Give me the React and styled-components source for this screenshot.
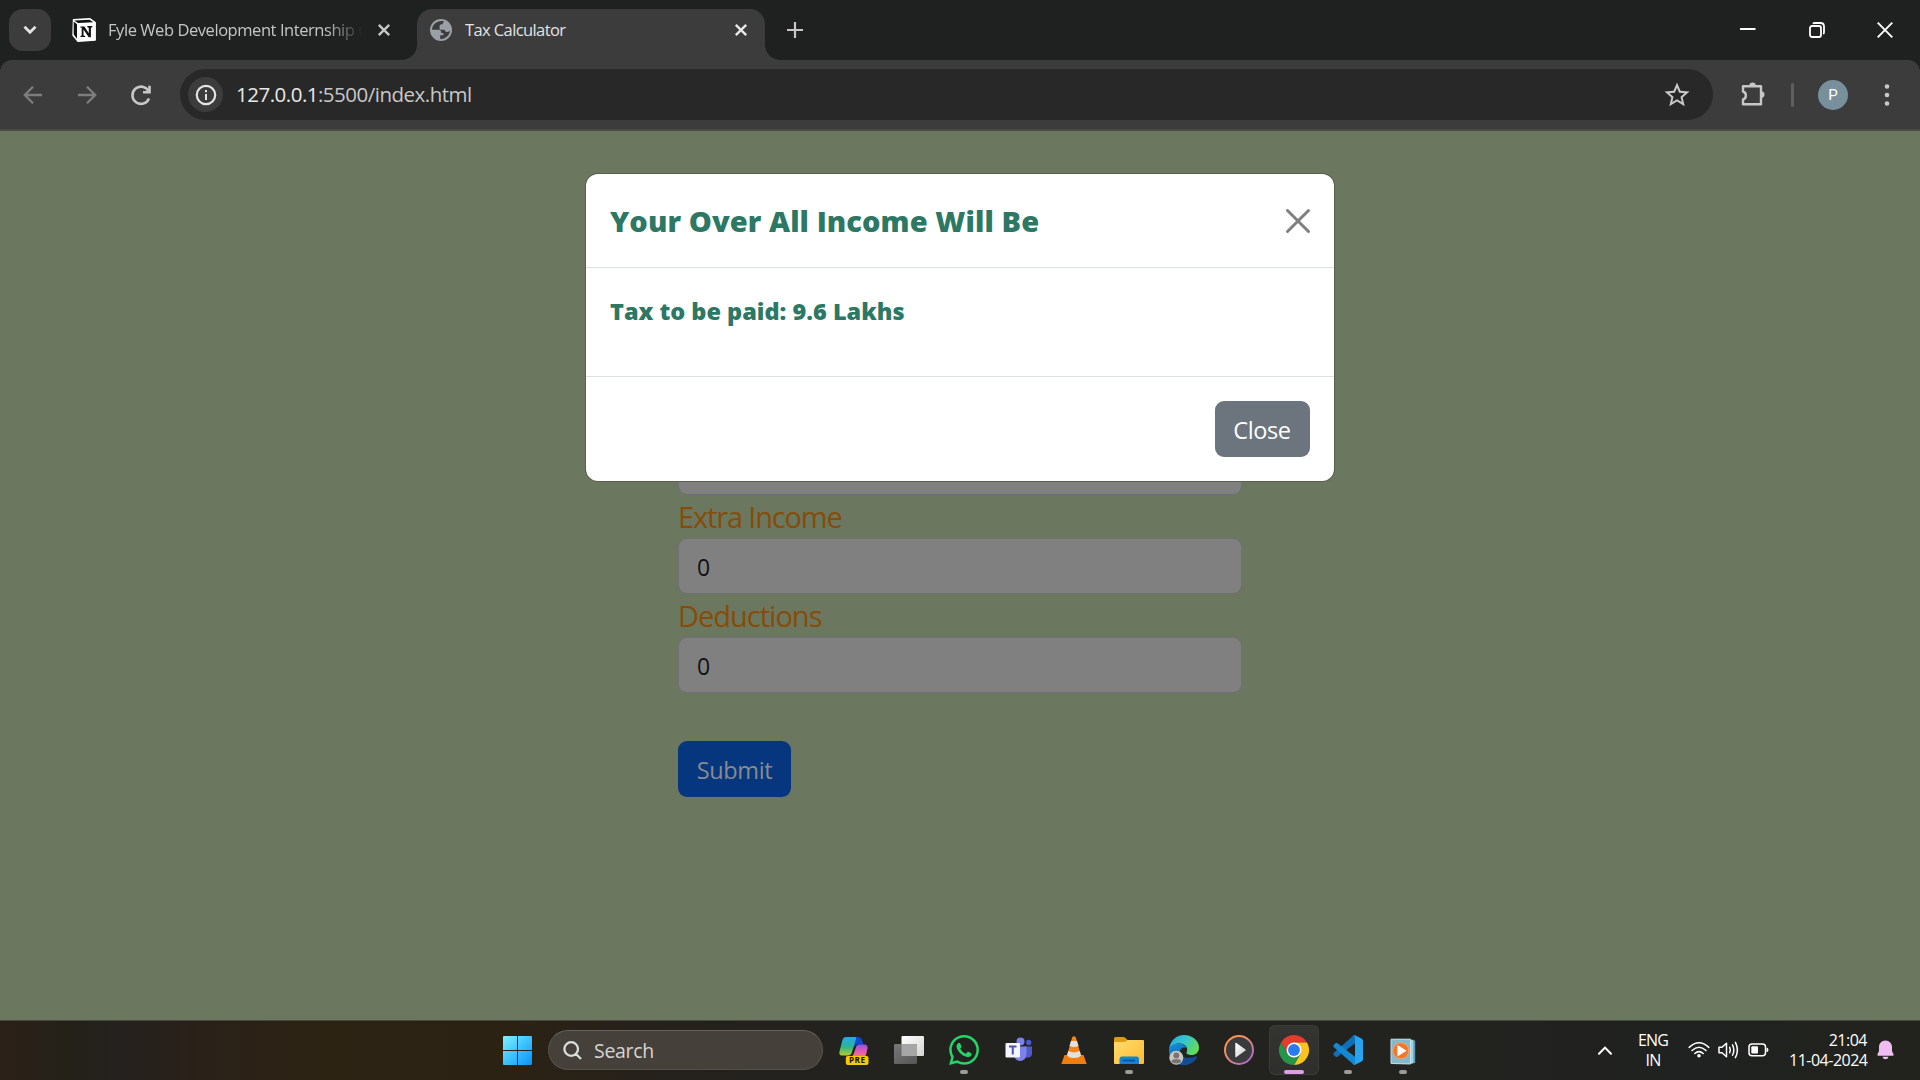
import React from "react";
import styled, { createGlobalStyle } from "styled-components";

const Global = createGlobalStyle`
  * { box-sizing: border-box; }
  html, body { margin: 0; padding: 0; background: #1f2120; overflow: hidden; }
  body { font-family: "Open Sans", "Noto Sans", sans-serif; }
  svg { display: block; flex: none; overflow: visible; }
  button, input { font-family: inherit; }
`;

const Screen = styled.div`
  width: 1920px;
  height: 1080px;
  display: flex;
  flex-direction: column;
  overflow: hidden;
`;

/* Browser chrome */
const TabStrip = styled.div`
  height: 60px;
  flex: none;
  display: flex;
  align-items: flex-start;
  background: #1f2120;
`;
const TabSearch = styled.div`
  width: 42px;
  height: 42px;
  margin: 9px 0 0 9px;
  border-radius: 14px;
  background: #3c3c3c;
  display: grid;
  place-items: center;
`;
const Tab = styled.div`
  position: relative;
  width: ${(p) => p.$width}px;
  height: 51px;
  margin-top: 9px;
  padding: ${(p) => p.$pad};
  display: flex;
  align-items: center;
  background: ${(p) => (p.$active ? "#3c3c3c" : "transparent")};
  border-radius: 15px 15px 0 0;
  &::before, &::after {
    content: "";
    display: ${(p) => (p.$active ? "block" : "none")};
    position: absolute;
    bottom: 0;
    width: 15px;
    height: 15px;
  }
  &::before { left: -15px; background: radial-gradient(circle at 0 0, transparent 14.5px, #3c3c3c 15.2px); }
  &::after { right: -15px; background: radial-gradient(circle at 100% 0, transparent 14.5px, #3c3c3c 15.2px); }
`;
const TabTitle = styled.span`
  flex: 1;
  height: 42px;
  margin-left: ${(p) => (p.$active ? 13 : 12)}px;
  font-size: 16.5px;
  line-height: 42px;
  align-self: flex-start;
  letter-spacing: ${(p) => p.$spacing}px;
  color: ${(p) => (p.$active ? "#e3e3e3" : "#c4c6c5")};
  white-space: nowrap;
  overflow: hidden;
  ${(p) => p.$fade && "mask-image: linear-gradient(90deg, #000 218px, transparent 254px);"}
`;
const TabIcon = styled.span`
  display: grid;
  place-items: center;
  align-self: flex-start;
  height: 42px;
`;
const NewTab = styled.div`
  width: 60px;
  height: 60px;
  display: grid;
  place-items: center;
`;
const WindowControls = styled.div`
  margin-left: auto;
  display: flex;
`;
const WindowButton = styled.div`
  width: 68.5px;
  height: 60px;
  padding-right: 1px;
  display: grid;
  place-items: center;
`;
const ToolbarBack = styled.div`
  background: #1f2120;
  flex: none;
`;
const Toolbar = styled.div`
  height: 71px;
  display: flex;
  align-items: center;
  background: #3c3c3c;
  border-radius: 12px 12px 0 0;
  border-bottom: 2px solid #4a4a4b;
`;
const NavButton = styled.div`
  width: 54px;
  display: grid;
  place-items: center;
`;
const NavGroup = styled.nav`
  display: flex;
  padding-left: 6px;
`;
const Omnibox = styled.div`
  width: 1533px;
  height: 51px;
  margin-left: 12px;
  padding: 0 21px 0 8px;
  display: flex;
  align-items: center;
  border-radius: 26px;
  background: #282828;
`;
const SiteInfo = styled.span`
  width: 35px;
  height: 35px;
  border-radius: 50%;
  background: #3c3c3c;
  display: grid;
  place-items: center;
`;
const Url = styled.span`
  flex: 1;
  margin-left: 13px;
  padding-bottom: 1px;
  font-size: 20.5px;
  line-height: 49px;
  letter-spacing: -0.5px;
  color: #c7c7c7;
  b { font-weight: 400; color: #e8e8e8; }
`;
const Divider = styled.span`
  width: 3px;
  height: 24px;
  margin: 0 24px 0 24px;
  border-radius: 2px;
  background: #5e5e5e;
`;
const Avatar = styled.span`
  width: 30px;
  height: 30px;
  border-radius: 50%;
  background: #78909c;
  color: #fff;
  font: 15px/31px Roboto, sans-serif;
  text-align: center;
`;
const ToolIcon = styled.span`
  margin-left: ${(p) => p.$gap}px;
`;

/* Web page */
const Page = styled.main`
  position: relative;
  flex: 1;
  background: #6c775f;
`;
const Form = styled.form`
  width: 564px;
  margin: 0 auto;
  padding-top: 308px;
  display: flex;
  flex-direction: column;
  align-items: flex-start;
`;
const Label = styled.label`
  height: 43px;
  font-size: 29px;
  line-height: 44px;
  letter-spacing: ${(p) => p.$spacing}px;
  color: #844d09;
`;
const Input = styled.input`
  width: 564px;
  height: 56px;
  padding: 2px 18px 0;
  border: 1px solid #6f7174;
  border-radius: 9px;
  background: #808080;
  color: #101214;
  font-size: 23px;
  outline: none;
`;
const Submit = styled.button`
  width: 113px;
  height: 56px;
  margin-top: 48px;
  padding: 2px 0 0;
  border: 0;
  border-radius: 9px;
  background: #06377e;
  color: #878b8f;
  font-size: 23.5px;
  letter-spacing: -0.4px;
`;
const Modal = styled.section`
  position: absolute;
  left: 586px;
  top: 43px;
  width: 748px;
  height: 307px;
  display: flex;
  flex-direction: column;
  background: #fff;
  border-radius: 12px;
  box-shadow: 0 0 0 1px #575f4d;
  color: #2c7864;
`;
const ModalHeader = styled.header`
  height: 94px;
  padding: 0 24px;
  display: flex;
  align-items: center;
  justify-content: space-between;
  border-bottom: 1px solid #dee2e6;
`;
const ModalTitle = styled.h1`
  margin: 0;
  font-size: 29px;
  font-weight: 800;
  line-height: 44px;
  letter-spacing: 0.08px;
  white-space: nowrap;
`;
const ModalBody = styled.div`
  height: 108px;
  padding: 25px 24px;
  font-size: 23.5px;
  font-weight: 800;
  line-height: 36px;
  letter-spacing: 0;
  white-space: nowrap;
`;
const ModalFooter = styled.footer`
  flex: 1;
  padding: 0 24px;
  display: flex;
  align-items: center;
  justify-content: flex-end;
  border-top: 1px solid #dee2e6;
`;
const CloseButton = styled.button`
  width: 95px;
  height: 56px;
  padding: 2px 1px 0 0;
  border: 0;
  border-radius: 9px;
  background: #6c757d;
  color: #fff;
  font-size: 23.5px;
  letter-spacing: -0.4px;
`;

/* Taskbar */
const Taskbar = styled.footer`
  height: 60px;
  flex: none;
  display: flex;
  align-items: center;
  border-top: 1px solid #474742;
  background: linear-gradient(90deg, #2b2118 0, #242119 70px, #25211e 120px, #2a2119 200px, #2d2313 330px, #2c2213 490px, #25211c 660px, #22221f 860px, #22221f 1500px, #1f2220 1700px, #23231d 1920px);
`;
const StartButton = styled.div`
  margin: -1px 16px 0 503px;
`;
const SearchBox = styled.div`
  width: 275px;
  height: 40px;
  margin: -1px 4px 0 0;
  padding-left: 14px;
  display: flex;
  align-items: center;
  gap: 12px;
  border: 1px solid #55514b;
  border-top-color: #66625b;
  border-radius: 20px;
  background: #45413a;
  color: #d6d5d3;
  font-size: 19.5px;
  line-height: 38px;
  letter-spacing: -0.3px;
`;
const SearchText = styled.span`
  padding-top: 2px;
`;
const AppCell = styled.div`
  width: 54.9px;
  height: 50px;
  margin-top: -1px;
  padding-top: 10px;
  display: grid;
  grid-template-rows: 30px 10px;
  justify-items: center;
  align-items: end;
  border-radius: 6px;
  background: ${(p) => (p.$state === "active" ? "linear-gradient(#343531, #2e2f2c)" : "transparent")};
  box-shadow: ${(p) => (p.$state === "active" ? "inset 0 0 0 1px #3a3b38" : "none")};
  ${(p) => p.$state === "active" && "width: 50px; margin-left: 2.5px; margin-right: 2.4px;"}
  &::after {
    content: "";
    width: ${(p) => (p.$state === "active" ? 20 : 8)}px;
    height: 4px;
    margin-bottom: 1px;
    border-radius: 2px;
    background: ${(p) => (p.$state === "active" ? "#dd9fe4" : p.$state === "open" ? "#9b9b99" : "transparent")};
  }
`;
const Tray = styled.div`
  margin: -1px 26px 0 auto;
  display: flex;
  align-items: center;
  color: #fff;
`;
const TrayText = styled.div`
  width: ${(p) => p.$width}px;
  margin-right: ${(p) => p.$gap}px;
  font-size: 16px;
  line-height: 20px;
  letter-spacing: ${(p) => p.$spacing}px;
  text-align: ${(p) => p.$align};
  white-space: nowrap;
`;
const TrayIcon = styled.span`
  margin-right: ${(p) => p.$gap}px;
`;

const Stroke = ({ w, h = w, d, color = "#c7c7c7", sw = 2.6, ...rest }) => (
  <svg width={w} height={h} viewBox={`0 0 ${w} ${h}`} fill="none" stroke={color} strokeWidth={sw} {...rest}>
    <path d={d} />
  </svg>
);

const NotionIcon = () => (
  <svg width="24" height="24" viewBox="0 0 24 24">
    <path d="M1.500 1.600 18 .8 23.200 4.500V22L6 23.300 1 17.200Z" fill="#fff" stroke="#fff" strokeWidth="1.400" strokeLinejoin="round" />
    <path d="M2.300 2.500 17.600 1.700 21.300 4.200 6 5ZM1.700 3.600 5 6.200V20.700L1.700 16.600Z" fill="#111" />
    <path d="M6.200 6.200 22.200 5.300V21L6.200 22.200Z" fill="#fff" />
    <path d="M8.400 8.400h4l4.400 6.800V9.700l-1.500-.4V8h5v1.200l-1.400.5v9.600h-2.200l-5.200-7.800v6l1.700.4v1.200H8.400v-1.100l1.300-.5V9.800l-1.300-.3Z" fill="#111" />
  </svg>
);
const GlobeIcon = () => (
  <svg width="22" height="22" viewBox="0 0 22 22">
    <circle cx="11" cy="11" r="11" fill="#9aa0a6" />
    <path d="M10.300 2.200C5.600 2.800 2.200 6.400 2 10.800L8.200 10.800C10.200 10.800 11.300 12 11.200 14H13.400V16.200H10.200V19.900C15.600 20.300 19.900 16 20 11.300C19.800 11.800 18.800 13 17.400 12.900C15.200 12.900 14.700 11.800 14.600 10.700H9.600V7.100C9.700 5.900 10.600 5.300 12 5.300H12.800C12.800 4 13.300 3.200 14.200 2.600C13 2.100 11.500 2 10.300 2.200Z" fill="#3c3c3c" />
  </svg>
);
const InfoIcon = () => (
  <svg width="22" height="22" viewBox="0 0 22 22" fill="none">
    <circle cx="11" cy="11" r="9.200" stroke="#e3e3e3" strokeWidth="2.200" />
    <path d="M11 10v6M11 6v2.200" stroke="#e3e3e3" strokeWidth="2" />
  </svg>
);
const ReloadIcon = () => (
  <svg width="24" height="24" viewBox="0 0 24 24" fill="none" stroke="#c7c7c7" strokeWidth="2.600">
    <path d="M19.600 8.200A8.600 8.600 0 1 0 20 15.500" />
    <path d="M20.500 2.800V9.300H14" />
  </svg>
);
const PuzzleIcon = () => (
  <svg width="28" height="28" viewBox="0 0 28 28">
    <path d="M4.500 5.300H22V23.300H4V18.500C7.800 17.500 7.800 11.500 4 10.500V5.300Z" fill="none" stroke="#c7c7c7" strokeWidth="2.400" strokeLinejoin="round" />
    <path d="M10.400 4.600A3.200 3.200 0 0 1 16.800 4.600ZM22.700 10.200A3.400 3.400 0 0 1 22.700 16.900Z" fill="#c7c7c7" />
  </svg>
);

const WindowsLogo = () => (
  <svg width="29" height="29" viewBox="0 0 29 29">
    <defs>
      <linearGradient id="win" x1="0" y1="0" x2="29" y2="29" gradientUnits="userSpaceOnUse">
        <stop stopColor="#7cf3ff" /><stop offset=".5" stopColor="#3dc3fb" /><stop offset="1" stopColor="#0b91f7" />
      </linearGradient>
    </defs>
    <path d="M1 0H14V14H0V1Q0 0 1 0ZM15 0H28Q29 0 29 1V14H15ZM0 15H14V29H1Q0 29 0 28ZM15 15H29V28Q29 29 28 29H15Z" fill="url(#win)" />
  </svg>
);
const Copilot = () => (
  <svg width="30" height="30" viewBox="0 0 30 30">
    <defs>
      <linearGradient id="cpa" x1="0" y1="0" x2="0" y2="1"><stop stopColor="#20a8f0" /><stop offset=".55" stopColor="#2eb58c" /><stop offset="1" stopColor="#b5cd25" /></linearGradient>
      <linearGradient id="cpb" x1="0" y1="0" x2="0" y2="1"><stop stopColor="#8b55e8" /><stop offset=".5" stopColor="#e255b8" /><stop offset="1" stopColor="#f57d77" /></linearGradient>
    </defs>
    <path d="M13 2H19Q22 2 23 5L24.500 9.500H19Q15.500 9.500 14.500 13L12 7Z" fill="#1546cf" />
    <path d="M7 2H16.500Q17.500 2.200 17 4L13 17Q12 20.500 9 20.500H3Q-.5 20.500.6 16L3.500 5Q4.300 2 7 2Z" fill="url(#cpa)" />
    <path d="M20 9.500H25Q29.500 9.500 28.400 14L27 20Q26.500 22 24 22H11Q14 21.500 15 18L17 12Q17.800 9.500 20 9.500Z" fill="url(#cpb)" />
    <rect x="6.800" y="21" width="22.700" height="9" rx="2" fill="#fbc900" />
    <text x="18.300" y="28.400" textAnchor="middle" fontFamily="Open Sans" fontWeight="700" fontSize="8.200" letterSpacing=".5" fill="#15130a">PRE</text>
  </svg>
);
const TaskView = () => (
  <svg width="30" height="30" viewBox="0 0 30 30">
    <defs>
      <linearGradient id="tv" x1="0" y1="0" x2="1" y2="1"><stop stopColor="#fff" /><stop offset="1" stopColor="#d4d4d4" /></linearGradient>
      <linearGradient id="tv2" x1="0" y1="0" x2="1" y2="1"><stop stopColor="#777" /><stop offset="1" stopColor="#555" /></linearGradient>
    </defs>
    <rect x="7.500" y="1" width="22.500" height="20" rx="1" fill="url(#tv)" />
    <rect x="0" y="9" width="23" height="20" rx="1" fill="url(#tv2)" />
    <path d="M7.500 9H22Q23 9 23 10V21H7.500Z" fill="#a6a6a6" />
  </svg>
);
const WhatsApp = () => (
  <svg width="30" height="30" viewBox="0 0 24 24" fill="#25d366">
    <path d="M17.472 14.382c-.297-.149-1.758-.867-2.030-.967-.273-.099-.471-.148-.670.150-.197.297-.767.966-.940 1.164-.173.199-.347.223-.644.075-.297-.150-1.255-.463-2.390-1.475-.883-.788-1.480-1.761-1.653-2.059-.173-.297-.018-.458.130-.606.134-.133.298-.347.446-.520.149-.174.198-.298.298-.497.099-.198.050-.371-.025-.520-.075-.149-.669-1.612-.916-2.207-.242-.579-.487-.500-.669-.510-.173-.008-.371-.010-.570-.010-.198 0-.520.074-.792.372-.272.297-1.040 1.016-1.040 2.479 0 1.462 1.065 2.875 1.213 3.074.149.198 2.096 3.200 5.077 4.487.709.306 1.262.489 1.694.625.712.227 1.360.195 1.871.118.571-.085 1.758-.719 2.006-1.413.248-.694.248-1.289.173-1.413-.074-.124-.272-.198-.570-.347" />
    <path d="M12.050 0C5.500 0 .160 5.335.157 11.892c0 2.096.547 4.142 1.588 5.945L.057 24l6.305-1.654a11.880 11.880 0 0 0 5.683 1.448h.005c6.554 0 11.890-5.335 11.893-11.893A11.800 11.800 0 0 0 12.050 0Zm0 21.785h-.004a9.870 9.870 0 0 1-5.031-1.378l-.361-.214-3.741.982.998-3.648-.235-.374a9.860 9.860 0 0 1-1.510-5.260c.001-5.450 4.436-9.884 9.888-9.884a9.880 9.880 0 0 1 9.884 9.892c-.003 5.450-4.437 9.884-9.888 9.884Z" />
  </svg>
);
const Teams = () => (
  <svg width="30" height="30" viewBox="0 0 30 30">
    <circle cx="24.700" cy="7.500" r="2.700" fill="#5059c9" />
    <path d="M20 11.500H28V18Q28 22.500 24 22.500H20Z" fill="#5059c9" />
    <circle cx="16.500" cy="6.500" r="4" fill="#7b83eb" />
    <path d="M10 11.500H22.500V19Q22 26 15.800 26Q10.500 25.500 10 19Z" fill="#7b83eb" />
    <rect x="1.500" y="8" width="14.500" height="14.500" rx="1" fill="#f4f5ff" />
    <path d="M5 11.600H12.500M8.750 11.600V19.500" stroke="#4b53bc" strokeWidth="2" />
  </svg>
);
const Vlc = () => (
  <svg width="30" height="30" viewBox="0 0 30 30">
    <path d="M5.500 20H24.500L27.500 28.500Q27.600 29 27 29H3Q2.400 29 2.500 28.500Z" fill="#f07d0c" />
    <path d="M13.300 2Q15 .4 16.700 2L22 20.500Q20 23 15 23Q10 23 8 20.500Z" fill="#f58414" />
    <path d="M12 6H18L19.600 11Q15 13 10.400 11ZM9.200 16Q15 18.800 20.800 16L22 20.500Q20 23 15 23Q10 23 8 20.500Z" fill="#e3e1df" />
  </svg>
);
const Folder = () => (
  <svg width="30" height="30" viewBox="0 0 30 30">
    <defs><linearGradient id="fd" x1="0" y1="0" x2="1" y2="1"><stop stopColor="#ffdb6e" /><stop offset="1" stopColor="#fdbc31" /></linearGradient></defs>
    <path d="M0 3.500Q0 2 1.500 2H9.500Q11 2 12 3.500L14.500 6V12H0Z" fill="#dd9c0f" />
    <path d="M0 7H10Q11.500 7 12.500 6L13.500 5H29Q30 5 30 6V28Q30 29 29 29H1Q0 29 0 28Z" fill="url(#fd)" />
    <path d="M5.500 29V24Q5.500 21.500 8 21.500H22.500Q25 21.500 25 24V29Z" fill="#1482d1" />
    <path d="M9.500 25.500H20.500" stroke="#0b4e93" strokeWidth="1.500" strokeLinecap="round" />
  </svg>
);
const Edge = () => (
  <svg width="30" height="30" viewBox="0 0 30 30">
    <defs>
      <linearGradient id="eg" x1="0" y1=".2" x2="1" y2=".6"><stop stopColor="#2ba9e0" /><stop offset=".5" stopColor="#35c6c8" /><stop offset="1" stopColor="#68de4a" /></linearGradient>
      <linearGradient id="eb" x1="0" y1="0" x2=".4" y2="1"><stop stopColor="#1593dc" /><stop offset="1" stopColor="#0a58a8" /></linearGradient>
    </defs>
    <path d="M0 14C1.500 5 7.500 0 15 0C23.500 0 30 6 30 12.500C30 17.500 26.500 20 22.500 20C19.500 20 17 19 17.500 17.500C19.500 14 17.500 8.500 10.500 8.500C5.500 8.500 1.500 11 0 14Z" fill="url(#eg)" />
    <path d="M0 14C1.500 10.500 5.500 8.200 10.500 8.500C14.500 8.800 17 11 17.500 13.500C15.500 11.500 11.500 12.500 11 17C10.500 23 15 28.500 21 28.500C19 30 16.500 30 15 30C6 30-.8 23 0 14Z" fill="url(#eb)" />
    <path d="M11 17C12 22.500 19 24.500 27 21.200Q28.600 21 28 22.500C25.500 27 21 30 16 29.500C13 27 10 22 11 17Z" fill="#114c94" />
    <circle cx="7.300" cy="22.700" r="7" fill="#c9c5c1" />
    <circle cx="7.300" cy="20.500" r="2.900" fill="#77736f" />
    <path d="M2.500 27Q2.500 24.300 5 24.300H9.600Q12 24.300 12 27Q7.500 30 2.500 27Z" fill="#77736f" />
  </svg>
);
const MediaPlayer = () => (
  <svg width="30" height="30" viewBox="0 0 30 30">
    <defs>
      <linearGradient id="mp" x1="0" y1="0" x2="1" y2="1"><stop stopColor="#ff9b38" /><stop offset=".45" stopColor="#e88a78" /><stop offset="1" stopColor="#9c63d8" /></linearGradient>
      <linearGradient id="mpw" x1="0" y1="0" x2="1" y2="1"><stop stopColor="#fff" /><stop offset="1" stopColor="#cfcfcf" /></linearGradient>
    </defs>
    <circle cx="15" cy="15" r="14" fill="#3b3b3d" stroke="url(#mp)" strokeWidth="2" />
    <path d="M12 8.500L21 15L12 21.500Z" fill="url(#mpw)" stroke="url(#mpw)" strokeWidth="1.500" strokeLinejoin="round" />
  </svg>
);
const Chrome = () => (
  <svg width="30" height="30" viewBox="0 0 48 48">
    <path d="M24 12H44.780A23.994 23.994 0 0 0 3.216 12.003L13.608 30Z" fill="#e33b2e" />
    <path d="M34.390 30.003L24 48A23.994 23.994 0 0 0 44.780 12H24Z" fill="#fcc31e" />
    <path d="M13.609 30.003L3.218 12.006A23.994 23.994 0 0 0 24.003 48L34.393 30Z" fill="#23964a" />
    <circle cx="24" cy="24" r="12" fill="#fff" />
    <circle cx="24" cy="24" r="9.500" fill="#2b7af0" />
  </svg>
);
const VsCode = () => (
  <svg width="30" height="30" viewBox="0 0 30 30">
    <path d="M22 .3V8.300L4.500 21.800Q3.500 22.500 2.500 21.700L.7 20.100Q-.3 19 .7 18L20.500.4Q21.200-.2 22 .3Z" fill="#0e70b8" />
    <path d="M22 29.700V21.700L4.500 8.200Q3.500 7.500 2.500 8.300L.7 9.900Q-.3 11 .7 12L20.500 29.600Q21.200 30.200 22 29.700Z" fill="#1488d2" />
    <path d="M22 .2L28.500 3.400Q30 4.100 30 5.700V24.300Q30 25.900 28.500 26.600L22 29.800Q20.800 30.100 20.200 29.300Q22 30.100 22 28V2Q22-.1 20.200.7Q20.800-.1 22 .2Z" fill="#27a3f0" />
  </svg>
);
const MediaLegacy = () => (
  <svg width="30" height="30" viewBox="0 0 30 30">
    <path d="M9 4.500L27.200 5.500V28L9 28.500Z" fill="#5b9db8" />
    <path d="M7 4.300L25.300 4.800V28.500L7 29Z" fill="#a6d2e2" />
    <path d="M3 4.200H22.500V29L3 28.500Z" fill="#85b9cd" stroke="#c2dfe9" strokeWidth="1" />
    <circle cx="12.800" cy="15.800" r="8" fill="#f0782a" stroke="#f7a264" strokeWidth="1" />
    <path d="M9.500 10L18.500 15.800L9.500 21.500Z" fill="#fff" />
  </svg>
);
const WifiIcon = () => (
  <svg width="22" height="18" viewBox="0 0 22 18" fill="none" stroke="#fff" strokeWidth="1.600" strokeLinecap="round">
    <path d="M1.200 6.300Q11-2.800 20.800 6.300M4 9.500Q11 3 18 9.500M6.800 12.500Q11 8.700 15.200 12.500" />
    <circle cx="11" cy="14.800" r="1" fill="#fff" />
  </svg>
);
const VolumeIcon = () => (
  <svg width="22" height="18" viewBox="0 0 22 18" fill="none" stroke="#fff" strokeWidth="1.500" strokeLinecap="round" strokeLinejoin="round">
    <path d="M1 6.300H4L8.500 2.200V15.800L4 11.700H1ZM11.700 6.300Q13 9 11.700 11.700M14.500 3.800Q17.200 9 14.500 14.200M17.400 1.400Q21.400 9 17.400 16.600" />
  </svg>
);
const BatteryIcon = () => (
  <svg width="22" height="14" viewBox="0 0 22 14" fill="none" stroke="#fff" strokeWidth="1.500">
    <rect x="1" y="1" width="16.500" height="11.700" rx="3" />
    <rect x="3.300" y="3.300" width="6.700" height="7.200" rx="1" fill="#fff" stroke="none" />
    <path d="M18.500 4.600Q20.500 5 20.500 7Q20.500 8.800 18.500 9.300" fill="#fff" stroke="none" />
  </svg>
);
const BellIcon = () => (
  <svg width="17" height="20" viewBox="0 0 17 20" fill="#efbdf2">
    <path d="M8.500.5C4.500.5 2 3.500 2 7.200V11L.4 14.400Q.1 15.800 1.500 15.800H15.500Q16.900 15.800 16.600 14.400L15 11V7.200C15 3.500 12.500.5 8.500.5ZM5.500 16.800H11.500Q11 19.300 8.500 19.300Q6 19.300 5.500 16.800Z" />
  </svg>
);

const apps = [
  [Copilot, ""], [TaskView, ""], [WhatsApp, "open"], [Teams, ""], [Vlc, ""], [Folder, "open"],
  [Edge, ""], [MediaPlayer, ""], [Chrome, "active"], [VsCode, "open"], [MediaLegacy, "open"],
];

export default function App() {
  return (
    <Screen>
      <Global />
      <TabStrip>
        <TabSearch><Stroke w={14} h={10} d="M1.500 1.700L7 7.200L12.500 1.700" color="#e3e3e3" sw={2.800} /></TabSearch>
        <Tab $width={366} $pad="0 27px 0 21px">
          <TabIcon><NotionIcon /></TabIcon>
          <TabTitle $fade $spacing={-0.44}>Fyle Web Development Internship C</TabTitle>
          <TabIcon><Stroke w={12} d="M.8.8L11.200 11.200M11.200.8L.8 11.200" sw={2.400} /></TabIcon>
        </Tab>
        <Tab $active $width={348} $pad="0 18px 0 13px">
          <TabIcon><GlobeIcon /></TabIcon>
          <TabTitle $active $spacing={-0.6}>Tax Calculator</TabTitle>
          <TabIcon><Stroke w={12} d="M.8.8L11.200 11.200M11.200.8L.8 11.200" color="#e8e8e8" sw={2.400} /></TabIcon>
        </Tab>
        <NewTab><Stroke w={16} d="M8 0V16M0 8H16" sw={2.200} /></NewTab>
        <WindowControls>
          <WindowButton><Stroke w={16} h={4} d="M0 1H15.500" color="#fff" sw={2} /></WindowButton>
          <WindowButton>
            <svg width="16" height="16" viewBox="0 0 16 16" fill="none" stroke="#fff" strokeWidth="1.800">
              <rect x="1" y="4" width="11" height="11" rx="2" />
              <path d="M4 1.800Q4.500 1 6 1H11.500Q15 1 15 4.500V10Q15 11.500 14.200 12" />
            </svg>
          </WindowButton>
          <WindowButton><Stroke w={16} d="M.7.7L15.300 15.300M15.300.7L.7 15.300" color="#fff" sw={1.900} /></WindowButton>
        </WindowControls>
      </TabStrip>
      <ToolbarBack>
        <Toolbar>
          <NavGroup>
            <NavButton><Stroke w={20} d="M19 10H2.500M10 1.800L1.800 10L10 18.200" color="#7d7d7d" sw={2.300} /></NavButton>
            <NavButton><Stroke w={20} d="M1 10H17.500M10 1.800L18.200 10L10 18.200" color="#7d7d7d" sw={2.300} /></NavButton>
            <NavButton><ReloadIcon /></NavButton>
          </NavGroup>
          <Omnibox>
            <SiteInfo><InfoIcon /></SiteInfo>
            <Url><b>127.0.0.1</b>:5500/index.html</Url>
            <svg width="30" height="30" viewBox="0 0 24 24" fill="#c7c7c7">
              <path d="M22 9.240l-7.190-.620L12 2 9.190 8.630 2 9.240l5.460 4.730L5.820 21 12 17.270 18.180 21l-1.630-7.030L22 9.240zM12 15.400l-3.760 2.270 1-4.280-3.320-2.880 4.380-.380L12 6.100l1.710 4.040 4.380.380-3.320 2.880 1 4.280L12 15.400z" />
            </svg>
          </Omnibox>
          <ToolIcon $gap={26}><PuzzleIcon /></ToolIcon>
          <Divider />
          <Avatar>P</Avatar>
          <ToolIcon $gap={35}>
            <svg width="8" height="22" viewBox="0 0 8 22" fill="#c7c7c7">
              <circle cx="4" cy="2.500" r="2.300" /><circle cx="4" cy="11" r="2.300" /><circle cx="4" cy="19.500" r="2.300" />
            </svg>
          </ToolIcon>
        </Toolbar>
      </ToolbarBack>
      <Page>
        <Form>
          <Input />
          <Label $spacing={-1.15}>Extra Income</Label>
          <Input defaultValue="0" />
          <Label $spacing={-1}>Deductions</Label>
          <Input defaultValue="0" />
          <Submit type="button">Submit</Submit>
        </Form>
        <Modal>
          <ModalHeader>
            <ModalTitle>Your Over All Income Will Be</ModalTitle>
            <Stroke w={24} d="M1.500 1.500L22.500 22.500M22.500 1.500L1.500 22.500" color="#7f7f7f" sw={3} strokeLinecap="round" />
          </ModalHeader>
          <ModalBody>Tax to be paid: 9.6 Lakhs</ModalBody>
          <ModalFooter><CloseButton type="button">Close</CloseButton></ModalFooter>
        </Modal>
      </Page>
      <Taskbar>
        <StartButton><WindowsLogo /></StartButton>
        <SearchBox>
          <Stroke w={19} d="M12.800 12.800L18 18M15 8A6.800 6.800 0 1 1 1.400 8A6.800 6.800 0 1 1 15 8Z" color="#dcdcda" sw={2.300} />
          <SearchText>Search</SearchText>
        </SearchBox>
        {apps.map(([Icon, state], i) => (
          <AppCell key={i} $state={state}><Icon /></AppCell>
        ))}
        <Tray>
          <TrayIcon $gap={26}><Stroke w={14} h={9} d="M1 7.800L7 1.600L13 7.800" color="#fff" sw={2} strokeLinecap="round" /></TrayIcon>
          <TrayText $width={30} $gap={20} $spacing={-0.8} $align="center">ENG<br />IN</TrayText>
          <TrayIcon $gap={8}><WifiIcon /></TrayIcon>
          <TrayIcon $gap={8}><VolumeIcon /></TrayIcon>
          <TrayIcon $gap={19}><BatteryIcon /></TrayIcon>
          <TrayText $width={78} $gap={10} $spacing={-0.5} $align="right">21:04<br />11-04-2024</TrayText>
          <BellIcon />
        </Tray>
      </Taskbar>
    </Screen>
  );
}
